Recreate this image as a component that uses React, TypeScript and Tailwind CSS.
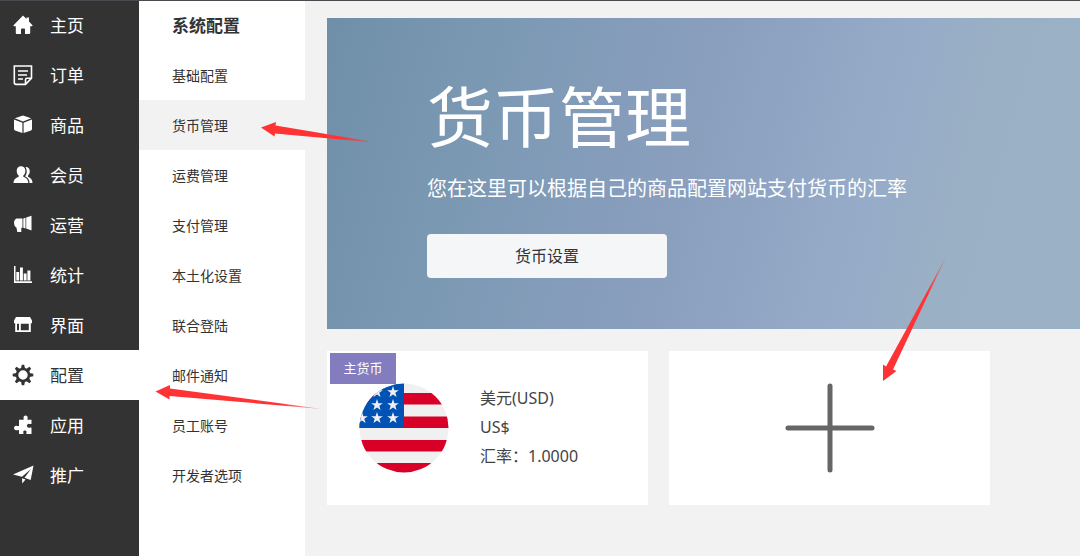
import type { ReactNode } from 'react'

type MenuItem = {
  label: string
  icon: ReactNode
}

const activeMenu = '配置'
const activeSubMenu = '货币管理'

const menu: MenuItem[] = [
  {
    label: '主页',
    icon: (
      <path d="M10 .5 13.5 4V2.4H16v4L19.7 10.4l-.7.8h-1.800V18q0 1-1 1H12v-4.500q0-1-1-1H9q-1 0-1 1V19H3.800q-1 0-1-1v-6.800H1l-.7-.8Z" />
    ),
  },
  {
    label: '订单',
    icon: (
      <g fill="none" stroke="currentColor" strokeWidth="1.6">
        <path d="M1.3 1h17.2v12.2l-6 6.2H3q-1.7 0-1.7-1.8ZM12.5 19v-4.2q0-1.5 1.5-1.5h4.3" />
        <path d="M5 6h10M5 10h9M5 14h5" />
      </g>
    ),
  },
  {
    label: '商品',
    icon: (
      <path d="M10 .5 18.2 3.300 10 6.400 1.800 3.300ZM1 4.600l8.400 3.200V18L2 15.400Q1 15 1 14ZM19 4.600l-8.400 3.200V18l7.400-2.600q1-.4 1-1.400Z" />
    ),
  },
  {
    label: '会员',
    icon: (
      <>
        <path d="M8 1.200c2.700 0 4.400 2 4.400 4.600 0 2.200-.9 3.900-2.100 4.800v1.200c3.200 1.100 5 2.800 5 6.200H.5c0-3.400 2-5.100 5.200-6.200v-1.200C4.500 9.700 3.700 8 3.700 5.800c0-2.600 1.600-4.600 4.300-4.600Z" />
        <path d="M12.500 2c2.700-.2 4.300 1.700 4.300 4.300 0 1.900-.7 3.300-1.800 4.100v1.300c2.700 1 4.500 2.800 4.500 6.300h-3c0-3.500-1.500-5.400-4.400-6.600 2-2.400 2.300-6.300.4-9.400Z" />
      </>
    ),
  },
  {
    label: '运营',
    icon: (
      <path d="M3.500 3.500H9.500v9.200H8.300V17H4.300l-.8-4.300Q1 11.500 1 8t2.500-4.500ZM10.300 3.500l2.200-.7v10.600l-2.200-.7ZM13.200 2.600 18.500.8v14.600l-5.300-1.800Z" />
    ),
  },
  {
    label: '统计',
    icon: (
      <path d="M1 1h1.500v15.300H19V18H1ZM3.300 7h2.900v8.500H3.300ZM7 2.500h2.900v13H7ZM10.700 8.500h2.900v7h-2.900ZM14.400 5.500h3v10h-3Z" />
    ),
  },
  {
    label: '界面',
    icon: (
      <path
        fillRule="evenodd"
        d="M3 2h14l2 3.500v2.800h-1.200V17H2.200V8.300H1V5.500ZM4 8.800v6.500h2V8.800ZM7.800 8.800v6.500h8V8.800Z"
      />
    ),
  },
  {
    label: '配置',
    icon: (
      <>
        <circle cx="10" cy="10" r="6" fill="none" stroke="currentColor" strokeWidth="2.600" />
        {[0, 45, 90, 135, 180, 225, 270, 315].map((angle) => (
          <path key={angle} d="m8 3.500.8-3.800h2.400l.8 3.800Z" transform={`rotate(${angle} 10 10)`} />
        ))}
      </>
    ),
  },
  {
    label: '应用',
    icon: (
      <path d="M6 4.800h4.500c.7-.7-.1-1.300 0-2.300C10.600 1.300 11.500.5 12.600.5s2 .8 2.100 2c.1 1-.7 1.600-.1 2.300H18.500v4c-.8.7-1.700-.1-2.700 0-1.100.1-1.900 1-1.900 2s.8 1.900 1.900 2c1 .1 1.900-.8 2.700-.1V19h-5c-.6-.8.2-1.300.1-2.200-.1-.8-.8-1.400-1.700-1.400s-1.600.6-1.700 1.400c-.1.900.7 1.400.1 2.200H6v-3.800c-.8-.7-1.700.3-2.900.1-1.200-.2-2.100-1.200-2.100-2.300s.9-2.200 2.100-2.300c1.200-.1 2.100.8 2.900.2Z" />
    ),
  },
  {
    label: '推广',
    icon: (
      <path d="M20.500.5 17.700 15l-6.200-2.200L18 4 9 11.800 0 9.500ZM9 13.300l3.500 1.200L9.300 18.500Z" />
    ),
  },
]

const subMenu = [
  '基础配置',
  '货币管理',
  '运费管理',
  '支付管理',
  '本土化设置',
  '联合登陆',
  '邮件通知',
  '员工账号',
  '开发者选项',
]

export default function App() {
  return (
    <div className="relative flex min-h-screen overflow-hidden bg-[#f2f2f2] font-['Noto_Sans','Noto_Sans_CJK_SC',sans-serif] text-[#333]">
      <Sidebar />
      <SubMenu />
      <main className="flex min-w-0 flex-1 flex-col gap-[22px] pt-[18px] pl-[22px]">
        <Banner />
        <div className="flex flex-wrap gap-[21px]">
          <CurrencyCard />
          <AddCurrency />
        </div>
      </main>

      <div className="absolute inset-x-0 top-0 h-px bg-[#4b484f]" />
      <Arrows />
    </div>
  )
}

function Sidebar() {
  return (
    <nav className="w-[139px] shrink-0 bg-[#333]">
      {menu.map((item) => (
        <a
          key={item.label}
          href="#"
          className={
            item.label === activeMenu
              ? 'flex h-[50px] items-center gap-[17px] bg-white pl-[13px] text-[17px] text-[#333]'
              : 'flex h-[50px] items-center gap-[17px] pl-[13px] text-[17px] text-white'
          }
        >
          <svg
            viewBox="0 0 20 20"
            className="size-5 overflow-visible"
            fill="currentColor"
            aria-hidden="true"
          >
            {item.icon}
          </svg>
          <span className="pt-0.5">{item.label}</span>
        </a>
      ))}
    </nav>
  )
}

function SubMenu() {
  return (
    <nav className="w-[166px] shrink-0 bg-white">
      <h2 className="flex h-[50px] items-center pt-0.5 pl-[33px] text-[17px] font-bold">
        系统配置
      </h2>
      {subMenu.map((label) => (
        <a
          key={label}
          href="#"
          className={
            label === activeSubMenu
              ? 'flex h-[50px] items-center bg-[#f2f2f2] pt-0.5 pl-[33px] text-sm'
              : 'flex h-[50px] items-center pt-0.5 pl-[33px] text-sm'
          }
        >
          {label}
        </a>
      ))}
    </nav>
  )
}

function Banner() {
  return (
    <section className="bg-[linear-gradient(105deg,#6f8fa8_0%,#7c99b4_22%,#8a9fbe_48%,#96abc8_70%,#9ab0c4_82%,#9bb1c6_100%)] px-[100px] pt-[58px] pb-[51px] text-white">
      <h1 className="text-[66px] leading-[80px]">货币管理</h1>
      <p className="mt-[17px] text-xl leading-8">
        您在这里可以根据自己的商品配置网站支付货币的汇率
      </p>
      <button
        type="button"
        className="mt-[29px] block h-11 w-60 cursor-pointer rounded-sm bg-[#f4f6f8] text-base text-[#333]"
      >
        货币设置
      </button>
    </section>
  )
}

function CurrencyCard() {
  return (
    <article className="relative flex h-[154px] w-[321px] items-center gap-[31px] bg-white pl-8">
      <UsaFlag />
      <div className="pb-0.5 text-base leading-[29px] text-[#444]">
        <p>美元(USD)</p>
        <p>US$</p>
        <p>汇率：1.0000</p>
      </div>
      <span className="absolute top-0.5 left-[3px] flex h-[31px] w-[66px] items-center justify-center bg-[#837dbf] text-[13px] text-white">
        主货币
      </span>
    </article>
  )
}

function AddCurrency() {
  return (
    <button
      type="button"
      aria-label="添加货币"
      className="flex h-[154px] w-[321px] cursor-pointer items-center justify-center bg-white"
    >
      <svg viewBox="0 0 90 90" className="size-[90px] text-[#666]" aria-hidden="true">
        <path d="M45 3v84M3 45h84" stroke="currentColor" strokeWidth="5" strokeLinecap="round" />
      </svg>
    </button>
  )
}

function UsaFlag() {
  const stars = [
    [3, 35],
    [18, 9],
    [18, 22],
    [18, 35],
    [34, 9],
    [34, 22],
    [34, 35],
  ]

  return (
    <svg viewBox="0 0 90 90" className="size-[90px]" role="img" aria-label="美国">
      <clipPath id="flag-circle">
        <circle cx="45" cy="45" r="44.500" />
      </clipPath>
      <g clipPath="url(#flag-circle)">
        <path fill="#f0f0f0" d="M0 0h90v90H0z" />
        <path
          fill="#d80027"
          d="M0 10h90v11.500H0zM0 33.500h90v11.500H0zM0 57h90v11.500H0zM0 80h90v11H0z"
        />
        <path fill="#0052b4" d="M0 0h45v45H0z" />
        {stars.map(([x, y]) => (
          <path
            key={`${x}-${y}`}
            fill="#f0f0f0"
            transform={`translate(${x} ${y})`}
            d="m0-6 1.400 4.200h4.400L2.300.8l1.300 4.200L0 2.400-3.600 5l1.300-4.200-3.500-2.600h4.400Z"
          />
        ))}
      </g>
    </svg>
  )
}

// Red pointers drawn over the page
function Arrows() {
  return (
    <>
      <svg
        viewBox="0 0 108 22"
        className="pointer-events-none absolute top-[121px] left-[261px] h-[22px] w-[108px]"
        aria-hidden="true"
      >
        <linearGradient id="arrow-right-fade">
          <stop offset="0.750" stopColor="#ff3333" />
          <stop offset="1" stopColor="#ff3333" stopOpacity="0.400" />
        </linearGradient>
        <path fill="url(#arrow-right-fade)" d="M0 6.500 15 1l-.5 3.500L107 20l0 1L14 12.500l-.500 3Z" />
      </svg>
      <svg
        viewBox="0 0 168 28"
        className="pointer-events-none absolute top-[384px] left-[155px] h-7 w-[168px]"
        aria-hidden="true"
      >
        <linearGradient id="arrow-left-fade">
          <stop offset="0.750" stopColor="#ff3333" />
          <stop offset="1" stopColor="#ff3333" stopOpacity="0.300" />
        </linearGradient>
        <path fill="url(#arrow-left-fade)" d="M.5 7.500 15 1v3.500l152 20.500L14.500 12v3.500Z" />
      </svg>
      <svg
        viewBox="0 0 66 126"
        className="pointer-events-none absolute top-[256px] left-[881px] h-[126px] w-[66px]"
        aria-hidden="true"
      >
        <linearGradient id="arrow-down-fade" x1="0" y1="1" x2="0" y2="0">
          <stop offset="0.700" stopColor="#ff3333" />
          <stop offset="1" stopColor="#ff3333" stopOpacity="0.300" />
        </linearGradient>
        <path fill="url(#arrow-down-fade)" d="M2 125V108.500l3 2L65 1 12 113.500l3.500 1.500Z" />
      </svg>
    </>
  )
}
